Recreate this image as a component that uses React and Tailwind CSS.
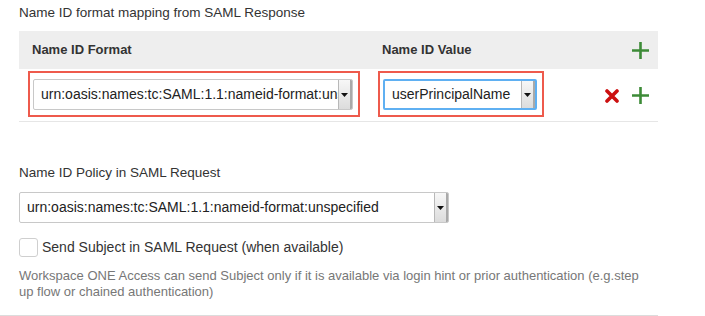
import React from "react";

function Arrow() {
  return (
    <div className="flex h-full w-[14px] items-center justify-center border-l border-[#b8b8b8] border-r-2 border-r-[#a9a9a9] bg-gradient-to-b from-[#f7f7f7] to-[#dcdcdc]">
      <svg width="7" height="4" viewBox="0 0 7 4">
        <path d="M0 0h7L3.5 4z" fill="#111" />
      </svg>
    </div>
  );
}

function Select({ value, width, focus }) {
  return (
    <div
      className={
        "flex h-[31px] items-stretch overflow-hidden rounded-[2px] bg-white " +
        (focus ? "border-2 border-[#5fb0f2]" : "border border-[#c8c8c8]")
      }
      style={{ width }}
    >
      <div className="flex flex-1 items-center overflow-hidden whitespace-nowrap pl-[7px] text-[14px] text-[#222]">
        {value}
      </div>
      <Arrow />
    </div>
  );
}

function Plus() {
  return (
    <svg width="17" height="17" viewBox="0 0 17 17">
      <path d="M8.5 0v17M0 8.5h17" stroke="#3d8b37" strokeWidth="2.6" />
    </svg>
  );
}

function Cross() {
  return (
    <svg width="14" height="14" viewBox="0 0 14 14">
      <path d="M2 2l10 10M12 2L2 12" stroke="#cc1010" strokeWidth="3.6" strokeLinecap="round" />
    </svg>
  );
}

export default function App() {
  return (
    <div
      className="w-[705px] h-[316px] bg-white overflow-hidden"
      style={{ fontFamily: '"Liberation Sans", Arial, sans-serif' }}
    >
      <div className="w-[658px] h-[316px] border-b border-[#dcdcdc] pl-[19px]">
        <div className="flex h-[27px] items-center text-[13.5px] text-[#333]">
          Name ID format mapping from SAML Response
        </div>

        <div className="mt-[4px] flex h-[38px] items-center bg-[#eeeeee] text-[13px] font-bold text-[#333]">
          <div className="w-[350px] pl-[13px]">Name ID Format</div>
          <div className="w-[234px] pl-[13px]">Name ID Value</div>
          <div className="flex flex-1 justify-end pr-[9px]">
            <Plus />
          </div>
        </div>

        <div className="flex h-[53px] items-start border-b border-[#e6e6e6] pt-[2px]">
          <div className="w-[350px] pl-[9px]">
            <div className="inline-block border-2 border-[#ee5a4c] pl-[3px] pr-[5px] pt-[6px] pb-[5px]">
              <Select value="urn:oasis:names:tc:SAML:1.1:nameid-format:unspecified" width={320} />
            </div>
          </div>
          <div className="w-[234px] pl-[9px]">
            <div className="inline-block border-2 border-[#ee5a4c] pl-[3px] pr-[5px] pt-[6px] pb-[5px]">
              <Select value="userPrincipalName" width={154} focus />
            </div>
          </div>
          <div className="flex flex-1 items-center justify-end gap-[13px] pr-[9px] pt-[16px]">
            <Cross />
            <Plus />
          </div>
        </div>

        <div className="mt-[41px] flex h-[20px] items-center text-[13.5px] text-[#333]">
          Name ID Policy in SAML Request
        </div>
        <div className="mt-[9px]">
          <Select value="urn:oasis:names:tc:SAML:1.1:nameid-format:unspecified" width={430} />
        </div>

        <div className="mt-[14px] flex items-center gap-[4px]">
          <div className="h-[19px] w-[19px] rounded-[3px] border border-[#cfcfcf] bg-white" />
          <span className="text-[14px] text-[#333]">Send Subject in SAML Request (when available)</span>
        </div>

        <p className="mt-[10px] w-[628px] text-[13px] leading-[16px] text-[#777]">
          Workspace ONE Access can send Subject only if it is available via login hint or prior authentication (e.g.step up flow or chained authentication)
        </p>
      </div>
    </div>
  );
}
